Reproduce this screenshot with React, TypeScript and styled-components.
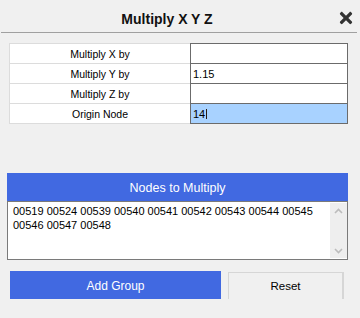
import styled, { createGlobalStyle } from 'styled-components';
import { FaTimes } from 'react-icons/fa';

const GlobalStyle = createGlobalStyle`
	html, body {
		margin: 0;
		padding: 0;
		background: #f0f0f0;
		font-family: 'Liberation Sans', Arial, sans-serif;
	}
	* {
		box-sizing: border-box;
	}
`;

const Dialog = styled.div`
	width: 360px;
	height: 318px;
	background: #f0f0f0;
	display: flex;
	flex-direction: column;
`;

const TitleBar = styled.div`
	height: 33px;
	margin: 0 3px 0 1px;
	display: flex;
	align-items: center;
	border-bottom: 1px solid #a0a0a0;
`;

const Title = styled.h1`
	flex: 1;
	margin: 0 0 0 -1px;
	padding-top: 5px;
	text-align: center;
	font-size: 14px;
	font-weight: 700;
	color: #111;
`;

const CloseButton = styled.button`
	width: 23px;
	height: 20px;
	margin: 4px 0 0 0;
	padding: 0 0 0 3px;
	border: none;
	background: transparent;
	color: #333;
	display: flex;
	align-items: center;
	justify-content: flex-start;
	cursor: pointer;
`;

const FieldGrid = styled.div`
	margin: 10px 0 0 9px;
	display: grid;
	grid-template-columns: 181px 158px;
	grid-auto-rows: auto;
`;

const Label = styled.div<{ $last?: boolean }>`
	height: ${(p) => (p.$last ? '21px' : '20px')};
	background: #fff;
	border-top: 1px solid #dcdcdc;
	border-left: 1px solid #dcdcdc;
	border-bottom: ${(p) => (p.$last ? '1px solid #dcdcdc' : 'none')};
	display: flex;
	align-items: center;
	justify-content: center;
	font-size: 10.5px;
	color: #000;
	padding-top: 1px;
`;

const Field = styled.div<{ $last?: boolean; $active?: boolean }>`
	height: ${(p) => (p.$last ? '21px' : '20px')};
	background: ${(p) => (p.$active ? '#a8d2ff' : '#fff')};
	border: 1px solid #6b6b6b;
	border-bottom: ${(p) => (p.$last ? '1px solid #6b6b6b' : 'none')};
	display: flex;
	align-items: center;
	padding: 1px 0 0 2px;
	font-size: 11px;
	color: #000;
`;

const Caret = styled.span`
	display: inline-block;
	width: 1px;
	height: 10px;
	margin-left: 1px;
	background: #2a1a10;
`;

const NodesPanel = styled.div`
	margin: 49px 0 0 7px;
	width: 341px;
	display: flex;
	flex-direction: column;
`;

const PanelHeader = styled.div`
	height: 28px;
	background: #4169e1;
	color: #fff;
	display: flex;
	align-items: center;
	justify-content: center;
	font-size: 12.5px;
	padding-top: 2px;
`;

const NodeBox = styled.div`
	height: 59px;
	background: #fff;
	border: 1px solid #7a7a7a;
	display: flex;
`;

const NodeText = styled.div`
	flex: 1;
	padding: 2px 0 0 5px;
	font-size: 11px;
	line-height: 14px;
	color: #000;
`;

const ScrollTrack = styled.div`
	width: 17px;
	margin: 1px 0;
	background: #eeeeee;
	display: flex;
	flex-direction: column;
	justify-content: space-between;
	align-items: center;
	padding: 5px 0 4px;
`;

const ButtonRow = styled.div`
	margin: 11px 0 0 10px;
	display: flex;
	align-items: flex-start;
	gap: 7px;
`;

const PrimaryButton = styled.button`
	width: 211px;
	height: 28px;
	border: none;
	background: #4169e1;
	color: #fff;
	font-family: 'Liberation Sans', Arial, sans-serif;
	font-size: 12px;
	padding: 2px 0 0;
`;

const GhostButton = styled.button`
	width: 116px;
	height: 27px;
	margin-top: 1px;
	background: #f0f0f0;
	border: 1px solid #d6d6d6;
	border-right-width: 2px;
	border-bottom: none;
	color: #000;
	font-family: 'Liberation Sans', Arial, sans-serif;
	font-size: 11.5px;
	padding: 0;
`;

const Chevron = ({ down }: { down?: boolean }) => (
	<svg width='9' height='6' viewBox='0 0 9 6'>
		<path d={down ? 'M1 1 L4.5 4.5 L8 1' : 'M1 5 L4.5 1.5 L8 5'} fill='none' stroke='#bcbcbc' strokeWidth='1.6' />
	</svg>
);

const fields = [
	{ label: 'Multiply X by', value: '' },
	{ label: 'Multiply Y by', value: '1.15' },
	{ label: 'Multiply Z by', value: '' },
	{ label: 'Origin Node', value: '14', active: true },
];

const nodes = ['00519', '00524', '00539', '00540', '00541', '00542', '00543', '00544', '00545', '00546', '00547', '00548'];

export default function App() {
	return (
		<>
			<GlobalStyle />
			<Dialog>
				<TitleBar>
					<Title>Multiply X Y Z</Title>
					<CloseButton aria-label='close'>
						<FaTimes size={18} />
					</CloseButton>
				</TitleBar>

				<FieldGrid>
					{fields.map((f, i) => {
						const last = i === fields.length - 1;
						return [
							<Label key={f.label} $last={last}>
								{f.label}
							</Label>,
							<Field key={f.label + '-v'} $last={last} $active={f.active}>
								{f.value}
								{f.active && <Caret />}
							</Field>,
						];
					})}
				</FieldGrid>

				<NodesPanel>
					<PanelHeader>Nodes to Multiply</PanelHeader>
					<NodeBox>
						<NodeText>{nodes.join(' ')}</NodeText>
						<ScrollTrack>
							<Chevron />
							<Chevron down />
						</ScrollTrack>
					</NodeBox>
				</NodesPanel>

				<ButtonRow>
					<PrimaryButton>Add Group</PrimaryButton>
					<GhostButton>Reset</GhostButton>
				</ButtonRow>
			</Dialog>
		</>
	);
}
